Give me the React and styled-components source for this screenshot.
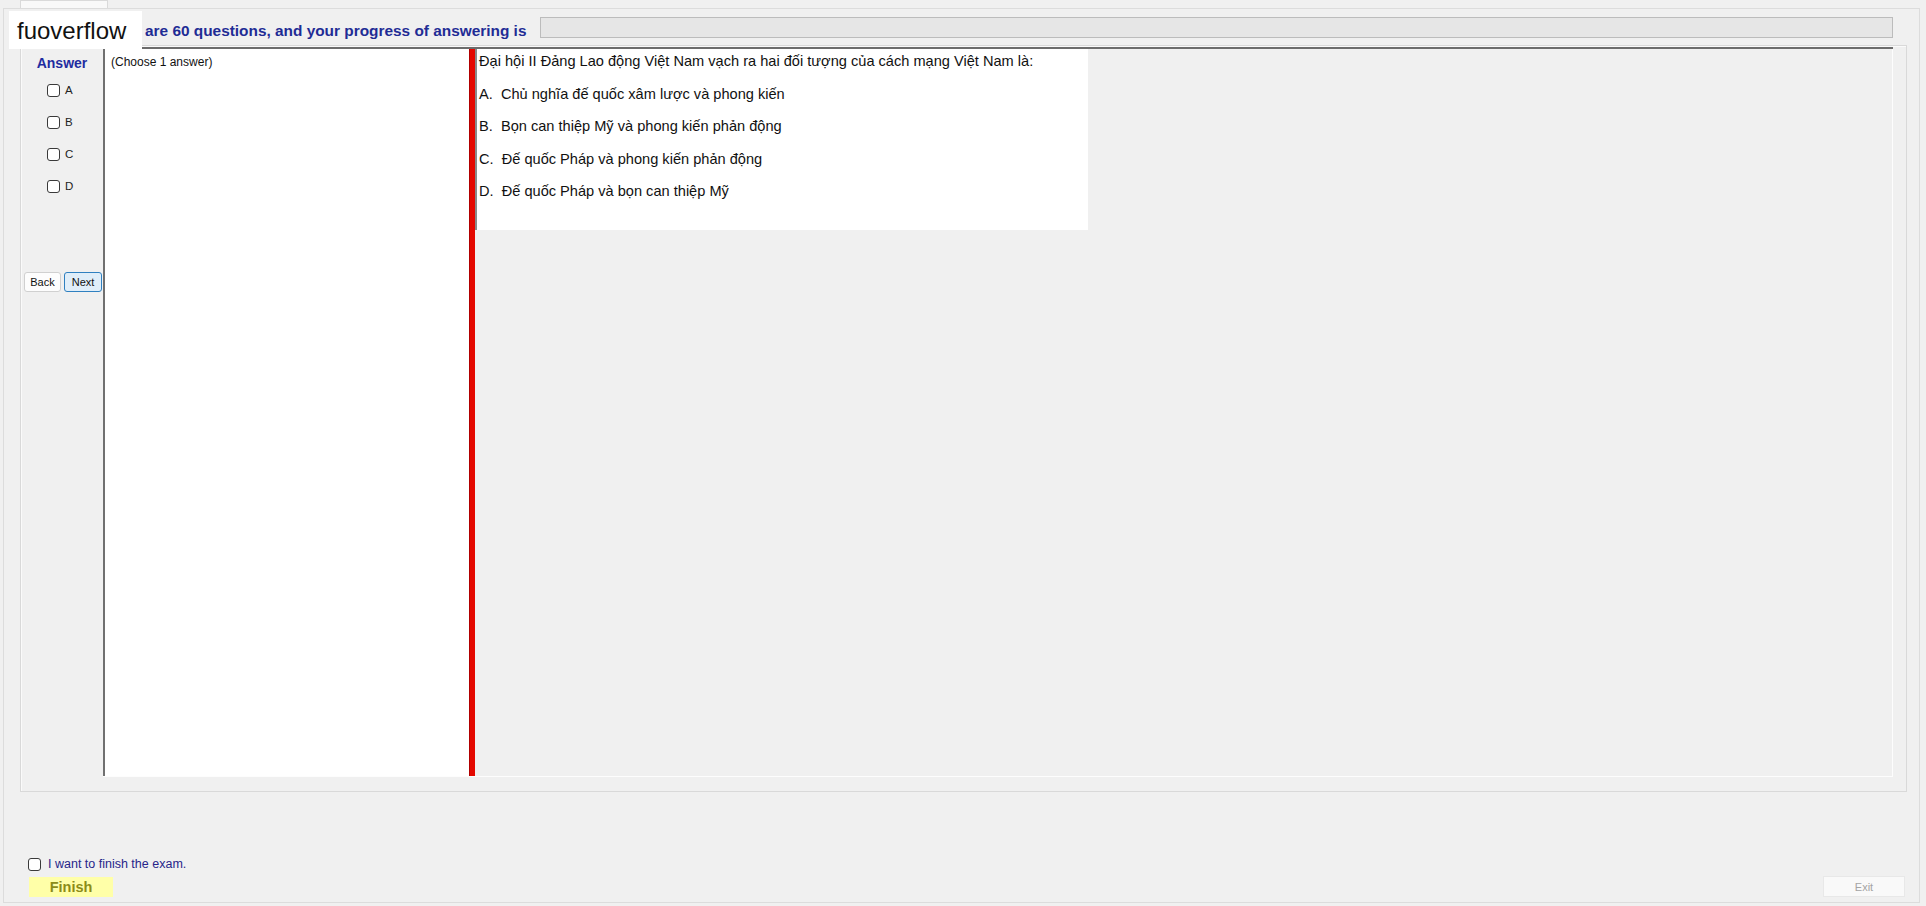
import styled, { createGlobalStyle } from 'styled-components';

const GlobalStyle = createGlobalStyle`
    html, body {
        margin: 0;
        padding: 0;
        background: #f0f0f0;
        font-family: "Liberation Sans", Arial, sans-serif;
    }
    #root {
        width: 1926px;
        height: 906px;
        overflow: hidden;
    }
`;

const Screen = styled.div`
    position: relative;
    width: 1926px;
    height: 906px;
    background: #f0f0f0;
`;

const TabStrip = styled.div`
    height: 8px;
    padding-left: 20px;
`;

const TabHead = styled.div`
    width: 88px;
    height: 8px;
    box-sizing: border-box;
    background: #f9f9f9;
    border: 1px solid #dadada;
    border-bottom: none;
`;

const Window = styled.div`
    margin-left: 3px;
    width: 1917px;
    height: 895px;
    box-sizing: border-box;
    border: 1px solid #dcdcdc;
    padding: 8px 12px 0 16px;
    display: flex;
    flex-direction: column;
`;

const HeaderRow = styled.div`
    display: grid;
    grid-template-columns: 520px 1fr;
    grid-template-rows: 21px;
    align-items: start;
    height: 21px;
    margin-right: 14px;
`;

// the opening word sits under the watermark, only the rest shows
const Title = styled.div`
    padding-left: 125px;
    padding-top: 5px;
    line-height: 18px;
    font-size: 15.4px;
    font-weight: bold;
    color: #1f2c95;
    white-space: nowrap;
`;

const Progress = styled.div`
    height: 21px;
    box-sizing: border-box;
    border: 1px solid #bcbcbc;
    background: #e6e6e6;
`;

const GroupBox = styled.div`
    margin-top: 7px;
    height: 747px;
    box-sizing: border-box;
    border: 1px solid #d9d9d9;
    box-shadow: inset 1px 1px 0 #fafafa;
    padding: 1px 13px 14px 0;
    display: flex;
`;

const AnswerCol = styled.div`
    width: 82px;
    display: flex;
    flex-direction: column;
`;

const AnswerLabel = styled.div`
    padding-top: 8px;
    line-height: 16px;
    text-align: center;
    font-size: 14px;
    font-weight: bold;
    color: #1f2ca0;
`;

const Choices = styled.div`
    margin-top: 3px;
    display: flex;
    flex-direction: column;
`;

const Choice = styled.label`
    height: 32px;
    display: flex;
    align-items: center;
    padding-left: 26px;
    gap: 5px;
    font-size: 11.5px;
    color: #222;
`;

const Tick = styled.span`
    width: 13px;
    height: 13px;
    box-sizing: border-box;
    border: 1px solid #3a3a3a;
    border-radius: 3px;
    background: #fff;
    flex: none;
`;

const NavButtons = styled.div`
    margin-top: 70px;
    padding-left: 3px;
    display: flex;
    gap: 3px;
`;

const NavButton = styled.button`
    width: ${p => (p.$primary ? 38 : 37)}px;
    height: 20px;
    padding: 0;
    box-sizing: border-box;
    font-family: "Liberation Sans", Arial, sans-serif;
    font-size: 11px;
    color: #111;
    border-radius: 3px;
    border: 1px solid ${p => (p.$primary ? '#2f80c0' : '#d0d0d0')};
    background: ${p => (p.$primary ? '#e0eef9' : '#fdfdfd')};
`;

const Split = styled.div`
    flex: 1;
    height: 730px;
    display: flex;
    border-top: 2px solid #6c6c6c;
    border-bottom: 1px solid #fdfdfd;
    box-sizing: border-box;
`;

const LeftPane = styled.div`
    width: 366px;
    box-sizing: border-box;
    background: #fff;
    border-left: 2px solid #707070;
`;

const Hint = styled.div`
    padding: 5px 0 0 6px;
    line-height: 16px;
    font-size: 12px;
    color: #111;
`;

const Splitter = styled.div`
    width: 6px;
    background: #e40800;
    border-left: 1px solid #b00000;
    box-sizing: border-box;
`;

const RightPane = styled.div`
    flex: 1;
    background: #f0f0f0;
    border-right: 1px solid #fdfdfd;
`;

const QuestionBox = styled.div`
    width: 613px;
    height: 181px;
    box-sizing: border-box;
    background: #fff;
    border-left: 2px solid #8a8a8a;
    padding: 3px 0 0 2px;
    display: flex;
    flex-direction: column;
    gap: 14.5px;
`;

const QLine = styled.div`
    line-height: 18px;
    font-size: 14.6px;
    color: #111;
    white-space: pre;
`;

const FinishRow = styled.label`
    margin-top: 64px;
    height: 16px;
    padding-left: 8px;
    display: flex;
    align-items: center;
    gap: 7px;
    font-size: 12.5px;
    color: #27258a;
`;

const BottomBar = styled.div`
    margin-top: 4px;
    display: flex;
    justify-content: space-between;
    align-items: flex-end;
    padding: 0 2px 0 9px;
`;

const FinishButton = styled.button`
    width: 84px;
    height: 20px;
    padding: 0;
    border: none;
    background: #ffffa8;
    font-family: "Liberation Sans", Arial, sans-serif;
    font-size: 14.5px;
    font-weight: bold;
    color: #8c8c18;
`;

const ExitButton = styled.button`
    width: 82px;
    height: 21px;
    padding: 0;
    border: 1px solid #e8e8e8;
    background: #f9f9f9;
    font-family: "Liberation Sans", Arial, sans-serif;
    font-size: 11px;
    color: #a4a4a4;
`;

const Watermark = styled.div`
    position: absolute;
    left: 9px;
    top: 11px;
    width: 133px;
    height: 38px;
    box-sizing: border-box;
    padding-left: 8px;
    background: #fff;
    line-height: 40px;
    font-size: 24px;
    color: #111;
`;

const options = [
    'A.  Chủ nghĩa đế quốc xâm lược và phong kiến',
    'B.  Bọn can thiệp Mỹ và phong kiến phản động',
    'C.  Đế quốc Pháp và phong kiến phản động',
    'D.  Đế quốc Pháp và bọn can thiệp Mỹ',
];

export default function App() {
    return (
        <Screen>
            <GlobalStyle />
            <TabStrip>
                <TabHead />
            </TabStrip>
            <Window>
                <HeaderRow>
                    <Title>are 60 questions, and your progress of answering is</Title>
                    <Progress />
                </HeaderRow>
                <GroupBox>
                    <AnswerCol>
                        <AnswerLabel>Answer</AnswerLabel>
                        <Choices>
                            {['A', 'B', 'C', 'D'].map(letter => (
                                <Choice key={letter}>
                                    <Tick />
                                    {letter}
                                </Choice>
                            ))}
                        </Choices>
                        <NavButtons>
                            <NavButton>Back</NavButton>
                            <NavButton $primary>Next</NavButton>
                        </NavButtons>
                    </AnswerCol>
                    <Split>
                        <LeftPane>
                            <Hint>(Choose 1 answer)</Hint>
                        </LeftPane>
                        <Splitter />
                        <RightPane>
                            <QuestionBox>
                                <QLine>Đại hội II Đảng Lao động Việt Nam vạch ra hai đối tượng của cách mạng Việt Nam là:</QLine>
                                {options.map(o => (
                                    <QLine key={o}>{o}</QLine>
                                ))}
                            </QuestionBox>
                        </RightPane>
                    </Split>
                </GroupBox>
                <FinishRow>
                    <Tick />
                    I want to finish the exam.
                </FinishRow>
                <BottomBar>
                    <FinishButton>Finish</FinishButton>
                    <ExitButton>Exit</ExitButton>
                </BottomBar>
            </Window>
            <Watermark>fuoverflow</Watermark>
        </Screen>
    );
}
